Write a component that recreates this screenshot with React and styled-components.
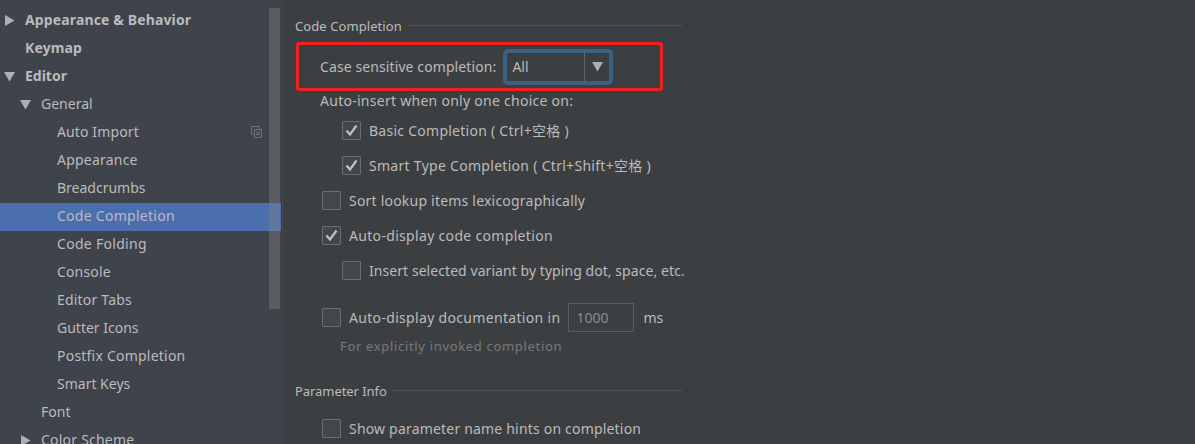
import styled, { createGlobalStyle, css } from "styled-components";

const GlobalStyle = createGlobalStyle`
  * {
    box-sizing: border-box;
  }
  body {
    margin: 0;
    background-color: #3c3f41;
    overflow: hidden;
  }
`;

const Container = styled.div`
  display: flex;
  width: 1195px;
  height: 444px;
  overflow: hidden;
  background-color: #3c3f41;
  color: #bbbbbb;
  font-family: "Noto Sans", "Noto Sans CJK SC", sans-serif;
  font-size: 14px;
  line-height: 20px;
  white-space: pre;
`;

const Sidebar = styled.div`
  position: relative;
  width: 281px;
  flex-shrink: 0;
  padding-top: 7px;
  background-color: #3e434c;
`;

const Divider = styled.div`
  width: 2px;
  flex-shrink: 0;
  background-color: #393c3f;
  border-right: 1px solid #46494b;
`;

const TreeItem = styled.div`
  display: flex;
  align-items: center;
  height: 28px;
  padding: 0 18px 2px ${(props) => props.$level * 16 + 4}px;
  font-weight: ${(props) => (props.$bold ? 700 : 400)};
  letter-spacing: ${(props) => props.$spacing || 0}px;
  ${(props) =>
    props.$selected &&
    css`
      background-color: #4b6eaf;
    `}
`;

const ArrowSlot = styled.span`
  display: flex;
  width: 21px;
`;

const TreeLabel = styled.span`
  flex: 1;
`;

const Scrollbar = styled.div`
  position: absolute;
  top: 8px;
  right: 1px;
  width: 11px;
  height: 301px;
  background-color: rgba(128, 128, 128, 0.42);
`;

const Content = styled.div`
  width: 399px;
  padding: 12px 0 0 12px;
`;

const SectionTitle = styled.div`
  display: flex;
  align-items: center;
  gap: 6px;
  height: 28px;
  margin-top: ${(props) => props.$top || 0}px;
  font-size: 13px;
  letter-spacing: ${(props) => props.$spacing || 0}px;
  &::after {
    content: "";
    flex: 1;
    height: 1px;
    margin-bottom: 1px;
    background-color: #515456;
  }
`;

const HighlightRow = styled.div`
  display: flex;
  align-items: center;
  gap: 7px;
  width: 367px;
  height: 49px;
  margin: 2px 0 0 1px;
  padding-left: 21px;
  border: 3px solid #f2201f;
  border-radius: 3px;
`;

const Combo = styled.div`
  display: flex;
  align-items: center;
  width: 110px;
  height: 36px;
  border: 4px solid #3d6185;
  border-radius: 5px;
`;

const ComboValue = styled.div`
  flex: 1;
  padding-left: 5px;
`;

const ComboButton = styled.div`
  display: flex;
  align-items: center;
  justify-content: center;
  width: 25px;
  height: 28px;
  border-left: 1px solid #646769;
`;

const Row = styled.div`
  display: flex;
  align-items: center;
  height: ${(props) => props.$height || 35}px;
  margin-top: ${(props) => props.$top || 0}px;
  padding-left: ${(props) => props.$indent}px;
`;

const Text = styled.span`
  height: 20px;
  letter-spacing: ${(props) => props.$spacing || 0}px;
`;

const Hint = styled(Text)`
  color: #777a7c;
  font-size: 13px;
`;

const Box = styled.span`
  display: flex;
  flex-shrink: 0;
  align-items: center;
  justify-content: center;
  width: 19px;
  height: 19px;
  margin-right: 8px;
  border: 1px solid #6b6d6e;
  border-radius: 1px;
  background-color: #43474a;
`;

const DelayInput = styled.div`
  display: flex;
  align-items: center;
  width: 66px;
  height: 29px;
  margin: 0 9px 0 8px;
  padding-left: 7px;
  border: 1px solid #5b5e60;
  color: #8a8c8e;
`;

const Triangle = ({ open, size = 11 }) => (
  <svg width={size} height={size} viewBox="0 0 11 11">
    <path d={open ? "M0 1h11L5.5 10.5z" : "M1 0v11l9.500-5.500z"} fill="#adb0b3" />
  </svg>
);

const CopyIcon = () => (
  <svg width="12" height="12" viewBox="0 0 12 12" fill="none" stroke="#6f737a">
    <path d="M2.500 8.500h-2v-8h8v2" />
    <path d="M3.500 3.500h7v8h-7zM5 6.500h4M5 8.500h4" />
  </svg>
);

const Checkbox = ({ checked }) => (
  <Box>
    {checked && (
      <svg width="13" height="13" viewBox="0 0 13 13" fill="none">
        <path d="M1.500 6.500L5 10.500L11.500 1.500" stroke="#bfc1c2" strokeWidth="2.200" />
      </svg>
    )}
  </Box>
);

const tree = [
  { label: "Appearance & Behavior", level: 0, bold: true, arrow: "closed", spacing: 0.14 },
  { label: "Keymap", level: 0, bold: true, spacing: 0.14 },
  { label: "Editor", level: 0, bold: true, arrow: "open" },
  { label: "General", level: 1, arrow: "open" },
  { label: "Auto Import", level: 2, copy: true, spacing: 0.12 },
  { label: "Appearance", level: 2, spacing: 0.22 },
  { label: "Breadcrumbs", level: 2 },
  { label: "Code Completion", level: 2, selected: true, spacing: 0.27 },
  { label: "Code Folding", level: 2, spacing: 0.3 },
  { label: "Console", level: 2, spacing: 0.15 },
  { label: "Editor Tabs", level: 2, spacing: 0.2 },
  { label: "Gutter Icons", level: 2 },
  { label: "Postfix Completion", level: 2, spacing: 0.22 },
  { label: "Smart Keys", level: 2 },
  { label: "Font", level: 1 },
  { label: "Color Scheme", level: 1, arrow: "closed", spacing: 0.22 },
];

const App = () => {
  return (
    <>
      <GlobalStyle />
      <Container>
        <Sidebar>
          {tree.map((item) => (
            <TreeItem
              key={item.label}
              $level={item.level}
              $bold={item.bold}
              $selected={item.selected}
              $spacing={item.spacing}
            >
              <ArrowSlot>
                {item.arrow && <Triangle open={item.arrow === "open"} />}
              </ArrowSlot>
              <TreeLabel>{item.label}</TreeLabel>
              {item.copy && <CopyIcon />}
            </TreeItem>
          ))}
          <Scrollbar />
        </Sidebar>
        <Divider />
        <Content>
          <SectionTitle $spacing={0.08}>Code Completion</SectionTitle>
          <HighlightRow>
            <Text $spacing={0.1}>Case sensitive completion:</Text>
            <Combo>
              <ComboValue>All</ComboValue>
              <ComboButton>
                <Triangle open />
              </ComboButton>
            </Combo>
          </HighlightRow>
          <Row $height={20} $indent={25}>
            <Text $spacing={0.27}>Auto-insert when only one choice on:</Text>
          </Row>
          <Row $indent={47} $top={2}>
            <Checkbox checked />
            <Text $spacing={0.26}>Basic Completion ( Ctrl+空格 )</Text>
          </Row>
          <Row $indent={47}>
            <Checkbox checked />
            <Text $spacing={0.29}>Smart Type Completion ( Ctrl+Shift+空格 )</Text>
          </Row>
          <Row $indent={27}>
            <Checkbox />
            <Text $spacing={0.21}>Sort lookup items lexicographically</Text>
          </Row>
          <Row $indent={27}>
            <Checkbox checked />
            <Text $spacing={0.32}>Auto-display code completion</Text>
          </Row>
          <Row $indent={47}>
            <Checkbox />
            <Text $spacing={0.06}>
              Insert selected variant by typing dot, space, etc.
            </Text>
          </Row>
          <Row $indent={27} $top={12}>
            <Checkbox />
            <Text $spacing={0.32}>Auto-display documentation in</Text>
            <DelayInput>1000</DelayInput>
            <Text>ms</Text>
          </Row>
          <Row $height={20} $indent={45} $top={1}>
            <Hint $spacing={0.67}>For explicitly invoked completion</Hint>
          </Row>
          <SectionTitle $top={21} $spacing={-0.06}>
            Parameter Info
          </SectionTitle>
          <Row $indent={27} $top={6}>
            <Checkbox />
            <Text $spacing={0.19}>Show parameter name hints on completion</Text>
          </Row>
        </Content>
      </Container>
    </>
  );
};

export default App;
